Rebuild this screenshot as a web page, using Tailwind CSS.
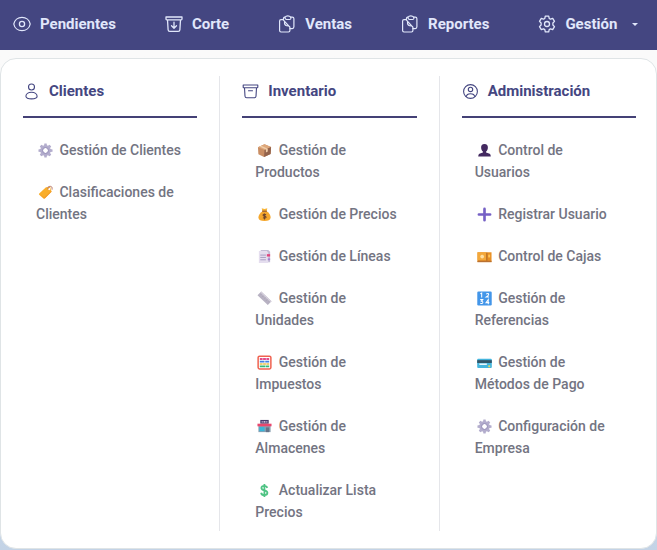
<!DOCTYPE html>
<html lang="es">
<head>
<meta charset="utf-8">
<meta name="viewport" content="width=device-width, initial-scale=1">
<title>Gestión</title>
<script src="https://cdn.jsdelivr.net/npm/@tailwindcss/browser@4"></script>
</head>
<body class="min-h-screen bg-linear-to-b from-[#fafafa] from-20% to-[#c3d3e6] font-[Roboto,sans-serif]">
<svg class="hidden" aria-hidden="true">
  <symbol id="clip" viewBox="0 0 18 18"><g fill="none" stroke="currentColor" stroke-width="1.2" stroke-linejoin="round" stroke-linecap="round"><path d="M5 4.600H3Q1.600 4.600 1.600 6v9.600Q1.600 17 3 17h7.500q1.400 0 1.400-1.400v-3.400L5 4.600M6.600 6.500q-.6 3.600 2 4.200 3 .1 3.300 1.800"/><path d="M5.400 4.500V3.700q0-1.500 1.400-1.500M12.700 2.200h1.600q1.600 0 1.600 1.500v8q0 1.800-1.700 1.900h-2.300"/><path d="M6.800 2.400Q8 .8 9.800.8t2.900 1.400l.2 1.300q-.2 1-1.200 1H8.400Q7 4.300 6.800 2.400Z"/></g></symbol>
  <symbol id="cog" viewBox="0 0 16 16"><path fill-rule="evenodd" fill="#b3adcd" d="M6.800.5h2.400l.3 2 1.100.5 1.700-1.200 1.800 1.800-1.200 1.700.4 1.100 2.200.4v2.400l-2.200.4-.4 1.100 1.200 1.700-1.800 1.800-1.700-1.200-1.100.5-.3 2H6.800l-.3-2-1.100-.5-1.700 1.200-1.800-1.800 1.200-1.700-.5-1.100-2.100-.4V6.800l2.100-.4.5-1.100-1.200-1.700 1.800-1.800L5.400 3l1.100-.5zM8 5.400a2.600 2.600 0 1 0 0 5.200 2.600 2.600 0 0 0 0-5.200"/><circle cx="8" cy="8" r="3.200" fill="none" stroke="#9a93bb"/></symbol>
</svg>

<nav class="flex h-[50px] items-center gap-[49px] bg-[#444681] px-[13px] pb-[2px] text-[15px] font-bold text-[#e1e7fb]" aria-label="Principal">
  <a href="#" class="flex items-center gap-[9px]"><svg class="size-[18px]" viewBox="0 0 18 18" fill="none" stroke="currentColor" stroke-width="1.300"><path d="M.8 9C1.500 5 5 2.400 9 2.400S16.500 5 17.200 9C16.500 13 13 15.600 9 15.600S1.500 13 .8 9Z"/><circle cx="9" cy="9" r="2.600"/></svg>Pendientes</a>
  <a href="#" class="flex items-center gap-[9px]"><svg class="size-[18px]" viewBox="0 0 18 18" fill="none" stroke="currentColor" stroke-width="1.300" stroke-linejoin="round" stroke-linecap="round"><path d="M1 2h16v2q0 .8-.8.800H1.800Q1 4.800 1 4zM2.500 4.800l.6 10q.1 1.600 1.700 1.600h8.400q1.600 0 1.700-1.600l.6-10M9 7.200v6M6.500 10.800 9 13.300l2.500-2.500"/></svg>Corte</a>
  <a href="#" class="flex items-center gap-[9px]"><svg class="size-[18px]"><use href="#clip"/></svg>Ventas</a>
  <a href="#" class="flex items-center gap-[9px]"><svg class="size-[18px]"><use href="#clip"/></svg>Reportes</a>
  <button type="button" aria-expanded="true" class="flex items-center gap-[9px]"><svg class="size-[18px]" viewBox="0 0 18 18" fill="none" stroke="currentColor" stroke-width="1.300" stroke-linejoin="round"><path d="M7.300 1.200h3.400l.5 2.200 1.300.8 2.200-.8 1.800 3-1.600 1.600v2l1.600 1.600-1.800 3-2.200-.8-1.300.8-.5 2.200H7.300l-.5-2.200-1.300-.8-2.200.8-1.800-3L3.100 10V8L1.500 6.400l1.800-3 2.200.8 1.300-.8z"/><circle cx="9" cy="9" r="2.500"/></svg>Gestión<svg class="ml-[6px] h-[3px] w-[6px]" viewBox="0 0 6 3"><path d="M0 0h6L3 3z" fill="currentColor"/></svg></button>
</nav>

<main class="mt-2 flex rounded-2xl border border-[#dfe4e6] bg-white py-[17px] text-sm leading-[22px] font-medium text-[#737482]">
  <section class="flex-1 border-r border-[#e5e6ea] px-[22px] pb-2">
    <h2 class="mb-[21px] flex h-[42px] gap-[9px] border-b-2 border-[#444176] pt-[4px] text-[15px] leading-[22px] font-bold text-[#444681]"><svg class="mt-[3px] size-[17px]" viewBox="0 0 17 17" fill="none" stroke="currentColor" stroke-width="1.100"><circle cx="8.500" cy="4" r="3"/><path d="M8.500 9.200c3.200 0 5.600 1.700 5.600 4.100 0 1.500-2.100 2.600-5.600 2.600s-5.600-1.100-5.600-2.600c0-2.400 2.400-4.100 5.600-4.100Z"/></svg>Clientes</h2>
    <ul class="flex flex-col gap-5 px-[13px]">
      <li><a href="#"><svg class="mr-[3px] ml-[2px] inline size-[15px] align-[-3px]"><use href="#cog"/></svg> Gestión de Clientes</a></li>
      <li><a href="#"><svg class="mr-[3px] ml-[2px] inline size-[15px] align-[-3px]" viewBox="0 0 16 16"><path d="M1.300 9 8.500 2.400 13 2l1.400 5.200-6.900 7Q6.500 15 5.500 14L1.300 10.300q-.7-.6 0-1.300Z" fill="#f9ae2b"/><path d="m2 10 4.700 4.500.8-.3 6.900-7-.3-1L6.800 13Z" fill="#f39c2b"/><circle cx="12" cy="4.300" r="1.200" fill="#fff"/><path d="M10.500 4.500Q10 1 13 1.300t2 3.700" fill="none" stroke="#b87965"/></svg> Clasificaciones de Clientes</a></li>
    </ul>
  </section>
  <section class="flex-1 border-r border-[#e5e6ea] px-[22px] pb-2">
    <h2 class="mb-[21px] flex h-[42px] gap-[9px] border-b-2 border-[#444176] pt-[4px] text-[15px] leading-[22px] font-bold text-[#444681]"><svg class="mt-[3px] size-[17px]" viewBox="0 0 17 17" fill="none" stroke="currentColor" stroke-width="1.100" stroke-linejoin="round" stroke-linecap="round"><path d="M1.200 2h14.600v2.200q0 .6-.6.600H1.800q-.6 0-.6-.6zM2.500 4.800l.5 8.400q.1 1.600 1.700 1.600h7.600q1.600 0 1.700-1.600l.5-8.400M6.500 7.800h4"/></svg>Inventario</h2>
    <ul class="flex flex-col gap-5 px-[13px]">
      <li><a href="#"><svg class="mr-[3px] ml-[2px] inline size-[15px] align-[-3px]" viewBox="0 0 16 16"><path d="m1 4.500 7-3.200 7 3-.5 7.400-7 3.300L1.500 12z" fill="#c98d63"/><path d="m1 4.500 7-3.200 7 3-7 3.200z" fill="#dda77b"/><path d="m8 7.500 7-3.200-.5 7.400-7 3.300z" fill="#93634c"/><path d="m4.500 3 7 3v3l-2 1V7L2.800 3.800z" fill="#f0cda8"/></svg> Gestión de Productos</a></li>
      <li><a href="#"><svg class="mr-[3px] ml-[2px] inline size-[15px] align-[-3px]" viewBox="0 0 16 16"><path d="M6 4.500h4.300C13 6 14.800 9 14.500 11.500 14.200 14 12 15 8 15S1.800 14 1.500 11.500C1.300 9 3.300 6 6 4.500Z" fill="#f5a72c"/><path d="M5 1.200 8 2l3-.8-.7 3H5.700z" fill="#f7b53a"/><path d="M5.500 4.500h5" stroke="#9b5a27" stroke-width="1.300"/><path d="M9.700 8.200Q6.500 7 6.500 8.700c0 1.400 3.200.6 3.200 2.200q-.2 1.400-3.400.5M8 6.800v6.400" fill="none" stroke="#70452b" stroke-width="1.200"/></svg> Gestión de Precios</a></li>
      <li><a href="#"><svg class="mr-[3px] ml-[2px] inline size-[15px] align-[-3px]" viewBox="0 0 16 16"><path d="M4 1h8l2 2v11H4z" fill="#c3bdd6"/><path d="M2 2h8.500L12 4v11H2z" fill="#e5deef"/><path d="M3.500 6.500h6M3.500 9h6M3.500 11.500h6" stroke="#a49cc0"/><path d="M10.500 5.500H14V8h-3.500z" fill="#e1447d"/><path d="M11.500 10H14v2h-2.500z" fill="#a681cf"/></svg> Gestión de Líneas</a></li>
      <li><a href="#"><svg class="mr-[3px] ml-[2px] inline size-[15px] align-[-3px]" viewBox="0 0 16 16"><path d="m.5 4.500 4-4 11 10.500-4 4z" fill="#b8b2c3"/><path d="m4.500.5 11 10.500-.9.900L3.500 1.500z" fill="#d5d0dc"/><path d="m5 3-1 1m3 1L5.500 6.500M9 7 8 8m3 1-1.500 1.500M13 11l-1 1" stroke="#a39dae" stroke-width=".7"/></svg> Gestión de Unidades</a></li>
      <li><a href="#"><svg class="mr-[3px] ml-[2px] inline size-[15px] align-[-3px]" viewBox="0 0 16 16"><rect x="1.200" y="1.200" width="13.600" height="13.600" rx="1.500" fill="#fff" stroke="#ef6250" stroke-width="1.600"/><path d="M3 4.200h10" stroke="#e34b88" stroke-width="2" stroke-dasharray="3 .5"/><path d="M3 7h10" stroke="#3f7fe5" stroke-width="2" stroke-dasharray="5 .8"/><path d="M3 9.600h10" stroke="#e8c14a" stroke-width="1.800" stroke-dasharray="3 .5"/><path d="M3 12.200h10" stroke="#35b878" stroke-width="1.800" stroke-dasharray="6 .5"/></svg> Gestión de Impuestos</a></li>
      <li><a href="#"><svg class="mr-[3px] ml-[2px] inline size-[15px] align-[-3px]" viewBox="0 0 16 16"><path d="M3.500 1h9v4h-9z" fill="#483a6c"/><path d="M5 3h1m1 0h2m1 0h1" stroke="#f5eaff" stroke-width="1.200"/><path d="M1.500 7h13v7h-13z" fill="#8aa0b2"/><path d="M2.500 8.500H8V13H2.500z" fill="#39b5d9"/><path d="M9.500 9H13v5H9.500z" fill="#657489"/><path d="M.5 5h15v2.800H.5z" fill="#e9476e"/></svg> Gestión de Almacenes</a></li>
      <li><a href="#"><svg class="mr-[3px] ml-[2px] inline size-[15px] align-[-3px]" viewBox="0 0 16 16"><path d="M11 5.200C10.500 3.500 9 3 7.500 3 5.800 3 4.700 4 4.700 5.300c0 3.300 6.400 1.800 6.400 5.200 0 1.600-1.400 2.500-3.100 2.500-2 0-3.300-.8-3.600-2.600M7.900 1v14" fill="none" stroke="#4fc384" stroke-width="1.900"/></svg> Actualizar Lista Precios</a></li>
    </ul>
  </section>
  <section class="flex-1 pr-5 pb-2 pl-[22px]">
    <h2 class="mb-[21px] flex h-[42px] gap-[9px] border-b-2 border-[#444176] pt-[4px] text-[15px] leading-[22px] font-bold text-[#444681]"><svg class="mt-[3px] size-[17px]" viewBox="0 0 17 17" fill="none" stroke="currentColor" stroke-width="1.100"><circle cx="8.500" cy="8.500" r="6.900"/><circle cx="8.500" cy="6.400" r="2.200"/><path d="M4.300 13.800c.2-2 1.700-3 4.200-3s4 1 4.200 3"/></svg>Administración</h2>
    <ul class="flex flex-col gap-5 pr-[18px] pl-[13px]">
      <li><a href="#"><svg class="mr-[3px] ml-[2px] inline size-[15px] align-[-3px]" viewBox="0 0 16 16"><path d="M8 1c2.500 0 3.800 1.600 3.600 4-.1 2-.9 3.300-1.900 4v1.200l3.800 1.300q1.200.6 1.200 3H1.300q0-2.400 1.200-3l3.800-1.300V9c-1-.7-1.800-2-1.900-4C4.200 2.600 5.500 1 8 1Z" fill="#432960"/></svg> Control de Usuarios</a></li>
      <li><a href="#"><svg class="mr-[3px] ml-[2px] inline size-[15px] align-[-3px]" viewBox="0 0 16 16"><path d="M8 2v12M2 8h12" stroke="#7560c5" stroke-width="2.800" stroke-linecap="round"/></svg> Registrar Usuario</a></li>
      <li><a href="#"><svg class="mr-[3px] ml-[2px] inline size-[15px] align-[-3px]" viewBox="0 0 16 16"><path d="M.5 3.500h15V14H.5z" fill="#e99024"/><path d="M.5 3.500H10V12H.5z" fill="#f3a83b"/><path d="M.5 12.500h15V14H.5z" fill="#b97132"/><circle cx="5.500" cy="8" r="2" fill="#ffe0a3"/><path d="M10.500 4v8.500" stroke="#a4632a"/><path d="M12 6h2v3h-2z" fill="#ffc65a"/></svg> Control de Cajas</a></li>
      <li><a href="#"><svg class="mr-[3px] ml-[2px] inline size-[15px] align-[-3px]" viewBox="0 0 16 16"><rect x=".3" y=".6" width="15.400" height="14.800" rx="1.300" fill="#4396e9"/><path d="m3.600 3 1.400-.8v4.600M9.800 3.200q2.800-1.200 2.600.6-.2 1-2.500 2.600h2.900M3.400 9.200h2.700L4.700 11q1.700 0 1.500 1.400-.4 1.400-2.700.6M12 14V9.200l-2.400 3.200h3.500" fill="none" stroke="#fff" stroke-width="1.100"/></svg> Gestión de Referencias</a></li>
      <li><a href="#"><svg class="mr-[3px] ml-[2px] inline size-[15px] align-[-3px]" viewBox="0 0 16 16"><rect x=".2" y="4" width="15.600" height="9.800" rx="1" fill="#45b5dd"/><path d="M.2 5.500h15.600v3H.2z" fill="#315568"/><path d="M2.500 9h8v1.700h-8z" fill="#e9f7fc"/><circle cx="13" cy="12" r="1.200" fill="#e5d65e"/></svg> Gestión de Métodos de Pago</a></li>
      <li><a href="#"><svg class="mr-[3px] ml-[2px] inline size-[15px] align-[-3px]"><use href="#cog"/></svg> Configuración de Empresa</a></li>
    </ul>
  </section>
</main>
</body>
</html>
